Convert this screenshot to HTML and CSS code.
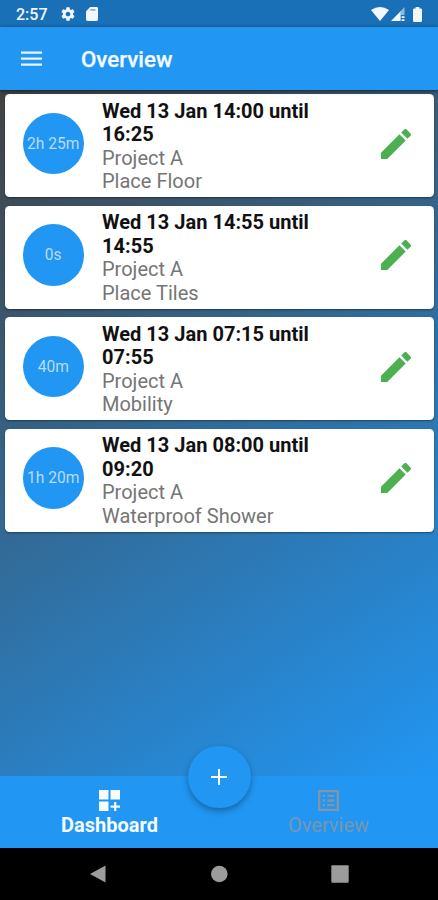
FILE: index.html
```html
<!DOCTYPE html>
<html lang="en">
<head>
<meta charset="utf-8">
<title>Overview</title>
<link rel="stylesheet" href="styles.css">
</head>
<body>
<svg width="0" height="0" class="defs">
  <symbol id="pencil" viewBox="0 0 24 24"><path d="M3 17.25V21h3.75L17.81 9.94l-3.75-3.75L3 17.25zM20.71 7.04c.39-.39.39-1.02 0-1.41l-2.34-2.34c-.39-.39-1.02-.39-1.41 0l-1.83 1.83 3.75 3.75 1.83-1.83z"/></symbol>
</svg>
<div class="screen">
  <div class="status">
    <span class="clock">2:57</span>
    <svg class="gear" viewBox="0 0 24 24"><path d="M19.43 12.98c.04-.32.07-.64.07-.98s-.03-.66-.07-.98l2.11-1.65c.19-.15.24-.42.12-.64l-2-3.46c-.12-.22-.39-.3-.61-.22l-2.49 1c-.52-.4-1.08-.73-1.69-.98l-.38-2.65C14.46 2.18 14.25 2 14 2h-4c-.25 0-.46.18-.49.42l-.38 2.65c-.61.25-1.17.59-1.69.98l-2.49-1c-.23-.09-.49 0-.61.22l-2 3.46c-.13.22-.07.49.12.64l2.11 1.65c-.04.32-.07.65-.07.98s.03.66.07.98l-2.11 1.65c-.19.15-.24.42-.12.64l2 3.46c.12.22.39.3.61.22l2.49-1c.52.4 1.08.73 1.69.98l.38 2.65c.03.24.24.42.49.42h4c.25 0 .46-.18.49-.42l.38-2.65c.61-.25 1.17-.59 1.69-.98l2.49 1c.23.09.49 0 .61-.22l2-3.46c.12-.22.07-.49-.12-.64l-2.11-1.65zM12 15.5c-1.93 0-3.5-1.57-3.5-3.5s1.57-3.5 3.5-3.5 3.5 1.57 3.5 3.5-1.57 3.5-3.5 3.5z"/></svg>
    <svg class="sd" viewBox="0 0 12 14"><path d="M4.2 0H10.6Q12 0 12 1.4V12.6Q12 14 10.6 14H1.4Q0 14 0 12.6V4.2Z"/><path class="slot" d="M4.3 2.2h5.2v1.5H4.3z"/></svg>
    <svg class="wifi" viewBox="0 0 18 14"><path d="M0 3Q9 -3 18 3L9 14Z"/></svg>
    <svg class="signal" viewBox="0 0 14 14"><path d="M0 14L9.600 4.200V14Z"/><path class="faint" d="M9.600 4.200L13.500 0V8H9.600Z"/><path d="M10.600 9.200h2.900v1.800h-2.900zM10.600 12.200h2.900V14h-2.900z"/></svg>
    <svg class="battery" viewBox="0 0 9 15"><path d="M2.6 0h3.8v1.5h1.3Q9 1.5 9 2.8v10.9Q9 15 7.7 15H1.3Q0 15 0 13.700V2.800Q0 1.500 1.300 1.500H2.600Z"/></svg>
  </div>
  <header class="appbar">
    <svg class="menu" viewBox="0 0 21 15"><path d="M0 .4h21v2.300H0zM0 6.400h21v2.300H0zM0 12.400h21v2.300H0z"/></svg>
    <h1>Overview</h1>
  </header>
  <main class="list">
    <article class="card">
      <div class="duration">2h 25m</div>
      <div class="info"><strong>Wed 13 Jan 14:00 until 16:25</strong><span>Project A</span><span>Place Floor</span></div>
      <svg class="edit"><use href="#pencil"/></svg>
    </article>
    <article class="card">
      <div class="duration">0s</div>
      <div class="info"><strong>Wed 13 Jan 14:55 until 14:55</strong><span>Project A</span><span>Place Tiles</span></div>
      <svg class="edit"><use href="#pencil"/></svg>
    </article>
    <article class="card">
      <div class="duration">40m</div>
      <div class="info"><strong>Wed 13 Jan 07:15 until 07:55</strong><span>Project A</span><span>Mobility</span></div>
      <svg class="edit"><use href="#pencil"/></svg>
    </article>
    <article class="card">
      <div class="duration">1h 20m</div>
      <div class="info"><strong>Wed 13 Jan 08:00 until 09:20</strong><span>Project A</span><span>Waterproof Shower</span></div>
      <svg class="edit"><use href="#pencil"/></svg>
    </article>
  </main>
  <nav class="tabs">
    <div class="tab active">
      <svg viewBox="0 0 21 21"><path d="M0 0h9.500v9.500H0zM11.500 0H21v9.500h-9.500zM0 11.500h9.500V21H0zM15.200 12h2.100v3.600H21v2.100h-3.700V21h-2.100v-3.300h-3.700v-2.100h3.700z"/></svg>
      <span>Dashboard</span>
    </div>
    <div class="tab">
      <svg viewBox="3 3 18 18"><path d="M19 5v14H5V5h14m1.100-2H3.900c-.5 0-.9.400-.9.900v16.200c0 .4.400.9.900.9h16.200c.400 0 .9-.5.900-.9V3.900c0-.5-.5-.9-.9-.9zM11 7h6v2h-6V7zm0 4h6v2h-6v-2zm0 4h6v2h-6zM7 7h2v2H7zm0 4h2v2H7zm0 4h2v2H7z"/></svg>
      <span>Overview</span>
    </div>
    <div class="fab"><svg viewBox="0 0 16 16"><path d="M7 0h2v7h7v2H9v7H7V9H0V7h7z"/></svg></div>
  </nav>
  <footer class="system">
    <svg viewBox="0 0 18 18"><path d="M16.500 .5V17.500L1 9Z"/></svg>
    <svg viewBox="0 0 18 18"><circle cx="9.300" cy="9" r="8.300"/></svg>
    <svg viewBox="0 0 18 18"><rect x=".3" y=".3" width="17.400" height="17.400" rx="1"/></svg>
  </footer>
</div>
</body>
</html>
```
FILE: styles.css
```css
* { box-sizing: border-box; }
body { margin: 0; font-family: Roboto, sans-serif; }
.defs { position: absolute; }
.screen { width: 438px; height: 900px; display: flex; flex-direction: column; overflow: hidden; }
.status { height: 27px; flex: none; background: #1a70b7; display: flex; align-items: center; padding: 0 15px 0 16px; color: #f2f8fd; fill: #f2f8fd; }
.clock { font-size: 16px; font-weight: 500; width: 44px; line-height: 27px; padding-top: 1px; }
.gear { width: 16px; height: 16px; margin-top: 1px; }
.sd { width: 12px; height: 14px; margin-left: 10px; margin-top: 1px; }
.slot { fill: #6fa5d2; }
.wifi { width: 18px; height: 14px; margin-left: auto; }
.signal { width: 14px; height: 14px; margin-left: 2px; margin-top: 1px; }
.faint { opacity: .55; }
.battery { width: 9px; height: 15px; margin-left: 8px; margin-right: 1px; margin-top: 1px; }
.appbar { height: 63px; flex: none; background: #2196f3; display: flex; align-items: center; padding: 0 21px; position: relative; box-shadow: 0 1px 4px rgba(0,0,0,.6); }
.menu { width: 21px; height: 15px; fill: #e9f4fe; }
h1 { margin: 1px 0 0 39px; font-size: 22.3px; font-weight: 500; line-height: 26px; color: #f4faff; -webkit-text-stroke: .25px #f4faff; }
.list { flex: 1; padding: 4px 4.500px; display: flex; flex-direction: column; gap: 8.500px; background: linear-gradient(147.400deg, #424242, #2196f3); }
.card { height: 103px; flex: none; display: flex; align-items: center; background: #fff; border-radius: 4.500px; padding: 0 18px; box-shadow: 0 1px 2px rgba(0,0,0,.4); }
.duration { width: 61.500px; height: 61.500px; flex: none; border-radius: 50%; background: #2196f3; color: #b9dcfa; font-size: 15.600px; display: flex; align-items: center; justify-content: center; white-space: nowrap; margin-top: -4.500px; padding-top: 1px; }
.info { width: 225px; margin-left: 18px; margin-top: 2px; display: flex; flex-direction: column; font-size: 20px; line-height: 23.500px; color: #757575; }
.info strong { font-weight: 700; color: #111; letter-spacing: .02px; }
.edit { width: 40px; height: 40px; margin-left: auto; margin-top: -4px; fill: #4caf50; }
.tabs { height: 72px; flex: none; background: #2196f3; display: flex; position: relative; }
.tab { flex: 1; display: flex; flex-direction: column; align-items: center; padding-top: 14px; font-size: 20px; line-height: 23.500px; color: #7896b0; fill: #8097aa; }
.tab svg { width: 21px; height: 21px; margin-bottom: 3px; }
.tab.active { color: #f6fbff; fill: #f6fbff; font-weight: 700; }
.fab { position: absolute; left: 188px; top: -30.500px; width: 62.500px; height: 62.500px; border-radius: 50%; background: #2196f3; display: flex; align-items: center; justify-content: center; box-shadow: 0 3px 6px rgba(0,0,0,.32); }
.fab svg { width: 16px; height: 16px; fill: #fff; }
.system { height: 52px; flex: none; background: #000; display: flex; justify-content: space-between; align-items: center; padding: 0 89px; fill: #9b9b9b; }
.system svg { width: 18px; height: 18px; }
```
